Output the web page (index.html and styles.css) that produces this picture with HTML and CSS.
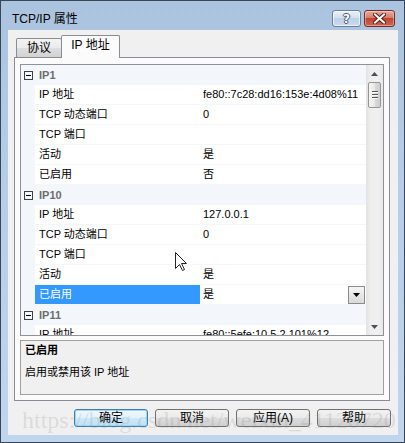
FILE: index.html
```html
<!DOCTYPE html>
<html lang="zh-CN">
<head>
<meta charset="utf-8">
<title>TCP/IP 属性</title>
<link rel="stylesheet" href="styles.css">
</head>
<body>
<div class="window">
  <div class="titlebar">
    <span class="title">TCP/IP 属性</span>
    <div class="caption">
      <div class="cbtn help"><span class="qmark">?</span></div>
      <div class="cbtn close">
        <svg width="13" height="11" viewBox="0 0 13 11"><path d="M2 1.5L11 9.5M11 1.5L2 9.5" stroke="#5a1d16" stroke-width="4" stroke-linecap="square"/><path d="M2 1.5L11 9.5M11 1.5L2 9.5" stroke="#ffffff" stroke-width="2" stroke-linecap="square"/></svg>
      </div>
    </div>
  </div>
  <div class="client">
    <div class="tabs">
      <div class="tab proto">协议</div>
      <div class="tab active">IP 地址</div>
    </div>
    <div class="panel">
      <div class="grid">
        <div class="rows">
          <div class="cat"><span class="box"></span><span class="label">IP1</span></div>
          <div class="row"><span class="gut"></span><span class="name">IP 地址</span><span class="val">fe80::7c28:dd16:153e:4d08%11</span></div>
          <div class="row"><span class="gut"></span><span class="name">TCP 动态端口</span><span class="val">0</span></div>
          <div class="row"><span class="gut"></span><span class="name">TCP 端口</span><span class="val"></span></div>
          <div class="row"><span class="gut"></span><span class="name">活动</span><span class="val">是</span></div>
          <div class="row"><span class="gut"></span><span class="name">已启用</span><span class="val">否</span></div>
          <div class="cat"><span class="box"></span><span class="label">IP10</span></div>
          <div class="row"><span class="gut"></span><span class="name">IP 地址</span><span class="val">127.0.0.1</span></div>
          <div class="row"><span class="gut"></span><span class="name">TCP 动态端口</span><span class="val">0</span></div>
          <div class="row"><span class="gut"></span><span class="name">TCP 端口</span><span class="val"></span></div>
          <div class="row"><span class="gut"></span><span class="name">活动</span><span class="val">是</span></div>
          <div class="row selected"><span class="gut"></span><span class="name">已启用</span><span class="val">是<span class="dd"><svg width="7" height="4" viewBox="0 0 7 4"><path d="M0 0H7L3.5 4Z" fill="#000"/></svg></span></span></div>
          <div class="cat"><span class="box"></span><span class="label">IP11</span></div>
          <div class="row"><span class="gut"></span><span class="name">IP 地址</span><span class="val">fe80::5efe:10.5.2.101%12</span></div>
        </div>
        <div class="scrollbar">
          <div class="sb-btn"><svg width="7" height="4" viewBox="0 0 7 4"><path d="M0 4H7L3.5 0Z" fill="#505050"/></svg></div>
          <div class="sb-track"><div class="thumb"><span class="grip"></span><span class="grip"></span><span class="grip"></span></div></div>
          <div class="sb-btn"><svg width="7" height="4" viewBox="0 0 7 4"><path d="M0 0H7L3.5 4Z" fill="#505050"/></svg></div>
        </div>
      </div>
      <div class="desc">
        <div class="desc-title">已启用</div>
        <div class="desc-text">启用或禁用该 IP 地址</div>
      </div>
    </div>
    <div class="buttons">
      <div class="btn default">确定</div>
      <div class="btn">取消</div>
      <div class="btn">应用(A)</div>
      <div class="btn">帮助</div>
    </div>
  </div>
  <div class="watermark">https://blog.csdn.net/weixin_41120720</div>
  <svg class="cursor" width="13" height="20" viewBox="0 0 13 20"><path d="M0.5 0.5V16.5L4.5 12.5L7.5 18.5L9.5 17.5L6.5 11.5H11.5Z" fill="#fff" stroke="#222" stroke-width="1" stroke-linejoin="miter"/></svg>
</div>
</body>
</html>
```

FILE: styles.css
```css
* { box-sizing: border-box; }
html, body { margin: 0; padding: 0; }
body {
  width: 405px;
  height: 443px;
  overflow: hidden;
  font-family: "Liberation Sans", "Noto Sans CJK SC", sans-serif;
  font-size: 11px;
  color: #000;
  background: #fff;
}
.window {
  position: relative;
  width: 405px;
  height: 443px;
  border: 1px solid #3a4657;
  background: linear-gradient(#aac3df, #b6cde8 40%, #c0d6ee);
  display: flex;
  flex-direction: column;
  overflow: hidden;
}
.titlebar {
  height: 29px;
  flex: none;
  display: flex;
  align-items: flex-start;
  padding: 9px 9px 0 11px;
}
.title {
  flex: 1;
  font-size: 12px;
  line-height: 16px;
  margin-top: 1px;
}
.caption { display: flex; gap: 3px; }
.cbtn {
  height: 17px;
  border-radius: 3px;
  display: flex;
  align-items: center;
  justify-content: center;
}
.cbtn.help {
  width: 29px;
  border: 1px solid #6b7f96;
  background: linear-gradient(#e9f1fa, #d2e1f1 45%, #bdd1e8 50%, #c8daee);
  box-shadow: inset 0 0 0 1px rgba(255, 255, 255, 0.6);
}
.qmark {
  font-family: "DejaVu Sans", sans-serif;
  font-weight: bold;
  font-size: 12px;
  line-height: 14px;
  color: #fff;
  text-shadow: 1px 0 0 #465a72, -1px 0 0 #465a72, 0 1px 0 #465a72, 0 -1px 0 #465a72;
}
.cbtn.close {
  width: 31px;
  border: 1px solid #7b2b22;
  background: linear-gradient(#e9aa9e, #d77c6c 45%, #c3442f 50%, #cf6651);
  box-shadow: inset 0 0 0 1px rgba(255, 255, 255, 0.35);
}
.client {
  margin: 0 6px 0 7px;
  height: 405px;
  flex: none;
  background: #f0f0f0;
  display: flex;
  flex-direction: column;
}
.tabs {
  height: 27px;
  flex: none;
  display: flex;
  align-items: flex-end;
  padding-left: 8px;
}
.tab {
  height: 19px;
  border: 1px solid #898c95;
  border-bottom: none;
  border-radius: 2px 2px 0 0;
  background: linear-gradient(#f3f3f3, #ebebeb 50%, #dedede 51%, #d2d2d2);
  font-size: 12px;
  line-height: 18px;
  text-align: center;
}
.tab.proto { width: 46px; }
.tab.active {
  width: 59px;
  height: 23px;
  margin-left: -1px;
  margin-bottom: -1px;
  background: #fbfbfb;
  position: relative;
  z-index: 1;
}
.panel {
  margin: 0 8px 0 6px;
  height: 344px;
  flex: none;
  border: 1px solid #898c95;
  background: #fbfbfb;
  padding: 6px 5px 5px;
  display: flex;
  flex-direction: column;
  gap: 4px;
}
.grid {
  height: 272px;
  flex: none;
  border: 1px solid #8e9196;
  display: flex;
  background: #f3f6fb;
}
.rows {
  width: 345px;
  height: 270px;
  overflow: hidden;
}
.cat {
  display: flex;
  align-items: center;
  height: 20px;
  background: #f3f6fb;
}
.box {
  width: 9px;
  height: 9px;
  margin-left: 3px;
  border: 1px solid #404040;
  display: flex;
  align-items: center;
  justify-content: center;
}
.box::before {
  content: "";
  width: 5px;
  height: 1px;
  background: #000;
}
.label {
  margin-left: 6px;
  font-weight: bold;
  color: #6d6d6d;
  line-height: 19px;
}
.row {
  display: flex;
  height: 20px;
  background: #f3f6fb;
}
.gut { width: 14px; flex: none; }
.name {
  width: 165px;
  height: 19px;
  flex: none;
  background: #fff;
  padding-left: 4px;
  line-height: 19px;
  white-space: nowrap;
}
.val {
  width: 166px;
  height: 19px;
  flex: none;
  background: #fff;
  padding-left: 3px;
  line-height: 19px;
  white-space: nowrap;
  display: flex;
  align-items: center;
}
.row.selected .name { background: #3399ff; color: #fff; }
.dd {
  margin-left: auto;
  margin-right: 1px;
  width: 17px;
  height: 18px;
  border: 1px solid #8b8b8b;
  background: linear-gradient(#f6f6f6, #e6e6e6 50%, #d9d9d9);
  display: flex;
  align-items: center;
  justify-content: center;
}
.scrollbar {
  width: 17px;
  flex: none;
  display: flex;
  flex-direction: column;
  background: linear-gradient(to right, #e2e2e2, #eeeeee 25%, #f0f0f0 70%, #e8e8e8);
}
.sb-btn {
  height: 17px;
  flex: none;
  display: flex;
  align-items: center;
  justify-content: center;
}
.sb-track { flex: 1; padding-top: 0; }
.thumb {
  margin-left: 2px;
  width: 13px;
  height: 26px;
  border: 1px solid #959595;
  border-radius: 2px;
  background: linear-gradient(to right, #f5f5f5, #e9e9e9 50%, #d9d9d9 51%, #cfcfcf);
  display: flex;
  flex-direction: column;
  align-items: center;
  justify-content: center;
  gap: 1px;
}
.grip {
  width: 6px;
  height: 2px;
  border-top: 1px solid #555;
  border-bottom: 1px solid #fafafa;
}
.desc {
  height: 55px;
  flex: none;
  border: 1px solid #a0a0a0;
  background: #f0f0f0;
  padding: 1px 4px;
}
.desc-title {
  font-weight: bold;
  line-height: 16px;
  margin-bottom: 6px;
}
.desc-text { line-height: 16px; }
.buttons {
  display: flex;
  justify-content: flex-end;
  gap: 7px;
  padding-right: 7px;
  margin-top: 8px;
}
.btn {
  width: 74px;
  height: 18px;
  border: 1px solid #707070;
  border-radius: 3px;
  background: linear-gradient(#f2f2f2, #ebebeb 50%, #dddddd 51%, #cfcfcf);
  font-size: 12px;
  line-height: 16px;
  text-align: center;
}
.btn.default {
  border-color: #3c7fb1;
  background: linear-gradient(#f1f8fd, #e2f2fc 50%, #cde9fa 51%, #bde1f7);
  box-shadow: inset 0 0 0 1px #9fd6f5;
}
.watermark {
  position: absolute;
  left: 21px;
  top: 407px;
  font-family: "Liberation Serif", serif;
  font-size: 24px;
  line-height: 24px;
  color: rgba(140, 140, 140, 0.22);
  white-space: nowrap;
  pointer-events: none;
}
.cursor {
  position: absolute;
  left: 174px;
  top: 251px;
}
```
